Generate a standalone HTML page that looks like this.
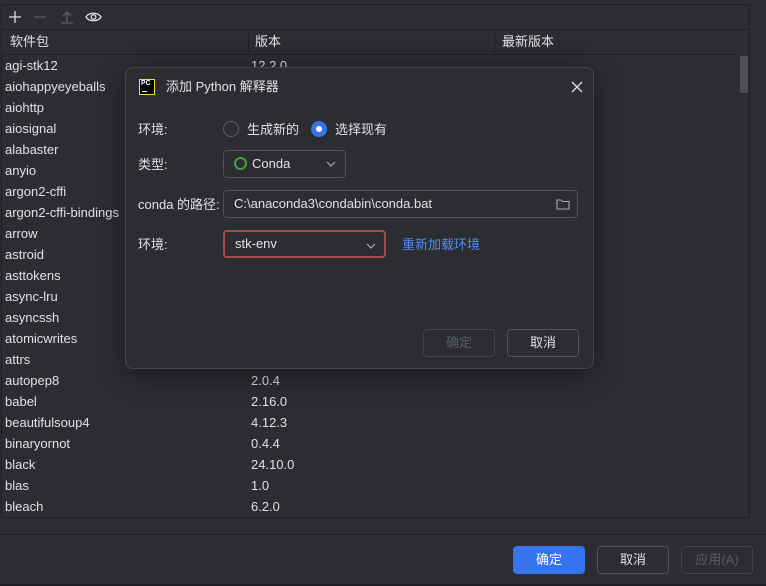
<!DOCTYPE html>
<html><head><meta charset="utf-8"><style>
*{margin:0;padding:0;box-sizing:border-box}
body{width:766px;height:586px;background:#2b2d30;font-family:"Liberation Sans","Noto Sans CJK SC",sans-serif;font-size:13px;line-height:16px;color:#dfe1e5;position:relative;overflow:hidden}
.abs{position:absolute}
.panel{left:1px;top:4px;width:749px;height:514px;border:1px solid #1e1f22}
.row{position:absolute;left:5px;height:21px;line-height:21px;white-space:nowrap}
.ver{position:absolute;left:251px;height:21px;line-height:21px}
.btn{position:absolute;height:28px;border:1px solid #4e5157;border-radius:4px;text-align:center;line-height:26px;color:#dfe1e5}
.dlg{left:125px;top:67px;width:469px;height:302px;background:#2b2d30;border:1px solid #43454a;border-radius:8px;box-shadow:0 6px 30px rgba(0,0,0,.45)}
.lbl{position:absolute;left:12px}
.field{position:absolute;background:#2b2d30;border:1px solid #4e5157;border-radius:4px;height:28px;line-height:26px;padding-left:10px}
</style></head><body>
<div class="abs panel"></div>
<div class="abs" style="left:2px;top:29px;width:747px;height:1px;background:#1e1f22"></div>
<div class="abs" style="left:2px;top:54px;width:737px;height:1px;background:#1e1f22"></div>
<div class="abs" style="left:248px;top:31px;width:1px;height:22px;background:#1e1f22"></div>
<div class="abs" style="left:494px;top:31px;width:1px;height:22px;background:#1e1f22"></div>
<svg class="abs" style="left:6px;top:9px" width="100" height="16" viewBox="0 0 100 16">
<path d="M3 8h12M9 2v12" stroke="#dfe1e5" stroke-width="1.3"/>
<path d="M28 8h12" stroke="#5a5d63" stroke-width="1.3"/>
<path d="M55 14h12M61 13V4M57 7l4-4 4 4" stroke="#5a5d63" stroke-width="1.3" fill="none"/>
<path d="M80 8c3-5 12-5 15 0c-3 5-12 5-15 0z" stroke="#dfe1e5" stroke-width="1.3" fill="none"/><circle cx="87.5" cy="8" r="2.3" stroke="#dfe1e5" stroke-width="1.3" fill="none"/>
</svg>
<div class="abs" style="left:10px;top:34px">软件包</div>
<div class="abs" style="left:255px;top:34px">版本</div>
<div class="abs" style="left:502px;top:34px">最新版本</div>
<div class="abs" style="left:740px;top:56px;width:8px;height:37px;background:#4d4f53;border-radius:1px"></div>
<div class="row" style="top:55px">agi-stk12</div><div class="ver" style="top:55px">12.2.0</div>
<div class="row" style="top:76px">aiohappyeyeballs</div>
<div class="row" style="top:97px">aiohttp</div>
<div class="row" style="top:118px">aiosignal</div>
<div class="row" style="top:139px">alabaster</div>
<div class="row" style="top:160px">anyio</div>
<div class="row" style="top:181px">argon2-cffi</div>
<div class="row" style="top:202px">argon2-cffi-bindings</div>
<div class="row" style="top:223px">arrow</div>
<div class="row" style="top:244px">astroid</div>
<div class="row" style="top:265px">asttokens</div>
<div class="row" style="top:286px">async-lru</div>
<div class="row" style="top:307px">asyncssh</div>
<div class="row" style="top:328px">atomicwrites</div>
<div class="row" style="top:349px">attrs</div>
<div class="row" style="top:370px">autopep8</div><div class="ver" style="top:370px">2.0.4</div>
<div class="row" style="top:391px">babel</div><div class="ver" style="top:391px">2.16.0</div>
<div class="row" style="top:412px">beautifulsoup4</div><div class="ver" style="top:412px">4.12.3</div>
<div class="row" style="top:433px">binaryornot</div><div class="ver" style="top:433px">0.4.4</div>
<div class="row" style="top:454px">black</div><div class="ver" style="top:454px">24.10.0</div>
<div class="row" style="top:475px">blas</div><div class="ver" style="top:475px">1.0</div>
<div class="row" style="top:496px">bleach</div><div class="ver" style="top:496px">6.2.0</div>
<div class="abs" style="left:0;top:534px;width:766px;height:1px;background:#1e1f22"></div>
<div class="abs" style="left:0;top:584px;width:766px;height:2px;background:#1e1f22"></div>
<div class="btn" style="left:513px;top:546px;width:72px;border-color:#3574f0;background:#3574f0;color:#fff">确定</div>
<div class="btn" style="left:597px;top:546px;width:72px">取消</div>
<div class="btn" style="left:681px;top:546px;width:72px;color:#5a5d63;border-color:#43454a">应用(A)</div>

<div class="abs dlg">
 <div class="abs" style="left:13px;top:11px;width:16px;height:16px;background:#000;border:1px solid #f0e030"><span style="position:absolute;left:1px;top:0;font-size:7px;color:#fff;font-weight:bold;line-height:8px">PC</span><span style="position:absolute;left:2px;top:11px;width:5px;height:1px;background:#fff"></span></div>
 <div class="abs" style="left:40px;top:11px">添加 Python 解释器</div>
 <svg class="abs" style="left:445px;top:13px" width="12" height="12"><path d="M1 1l10 10M11 1L1 11" stroke="#dfe1e5" stroke-width="1.3"/></svg>
 <div class="lbl" style="top:54px">环境:</div>
 <div class="abs" style="left:97px;top:53px;width:16px;height:16px;border:1px solid #5a5d63;border-radius:50%"></div>
 <div class="abs" style="left:121px;top:54px">生成新的</div>
 <div class="abs" style="left:185px;top:53px;width:16px;height:16px;background:#3574f0;border-radius:50%"><div style="position:absolute;left:5px;top:5px;width:6px;height:6px;background:#fff;border-radius:50%"></div></div>
 <div class="abs" style="left:209px;top:54px">选择现有</div>
 <div class="lbl" style="top:89px">类型:</div>
 <div class="field" style="left:97px;top:82px;width:123px;padding-left:28px">Conda</div>
 <div class="abs" style="left:108px;top:89px;width:13px;height:13px;border:2px solid #4a9a4a;border-radius:50%"></div>
 <svg class="abs" style="left:200px;top:93px" width="10" height="6"><path d="M1 1l4 4 4-4" stroke="#aaa" fill="none" stroke-width="1.2"/></svg>
 <div class="lbl" style="top:129px">conda 的路径:</div>
 <div class="field" style="left:97px;top:122px;width:355px">C:\anaconda3\condabin\conda.bat</div>
 <svg class="abs" style="left:430px;top:130px" width="14" height="12"><path d="M1 2h4l1.5 1.5H13V11H1z" stroke="#aaa" fill="none" stroke-width="1.1"/></svg>
 <div class="lbl" style="top:169px">环境:</div>
 <div class="field" style="left:97px;top:162px;width:163px;border:2px solid #a14d4d;line-height:24px">stk-env</div>
 <svg class="abs" style="left:240px;top:175px" width="10" height="6"><path d="M1 1l4 4 4-4" stroke="#aaa" fill="none" stroke-width="1.2"/></svg>
 <div class="abs" style="left:276px;top:169px;color:#548af7">重新加载环境</div>
 <div class="btn" style="left:297px;top:261px;width:72px;color:#5a5d63;border-color:#43454a">确定</div>
 <div class="btn" style="left:381px;top:261px;width:72px">取消</div>
</div>
</body></html>
